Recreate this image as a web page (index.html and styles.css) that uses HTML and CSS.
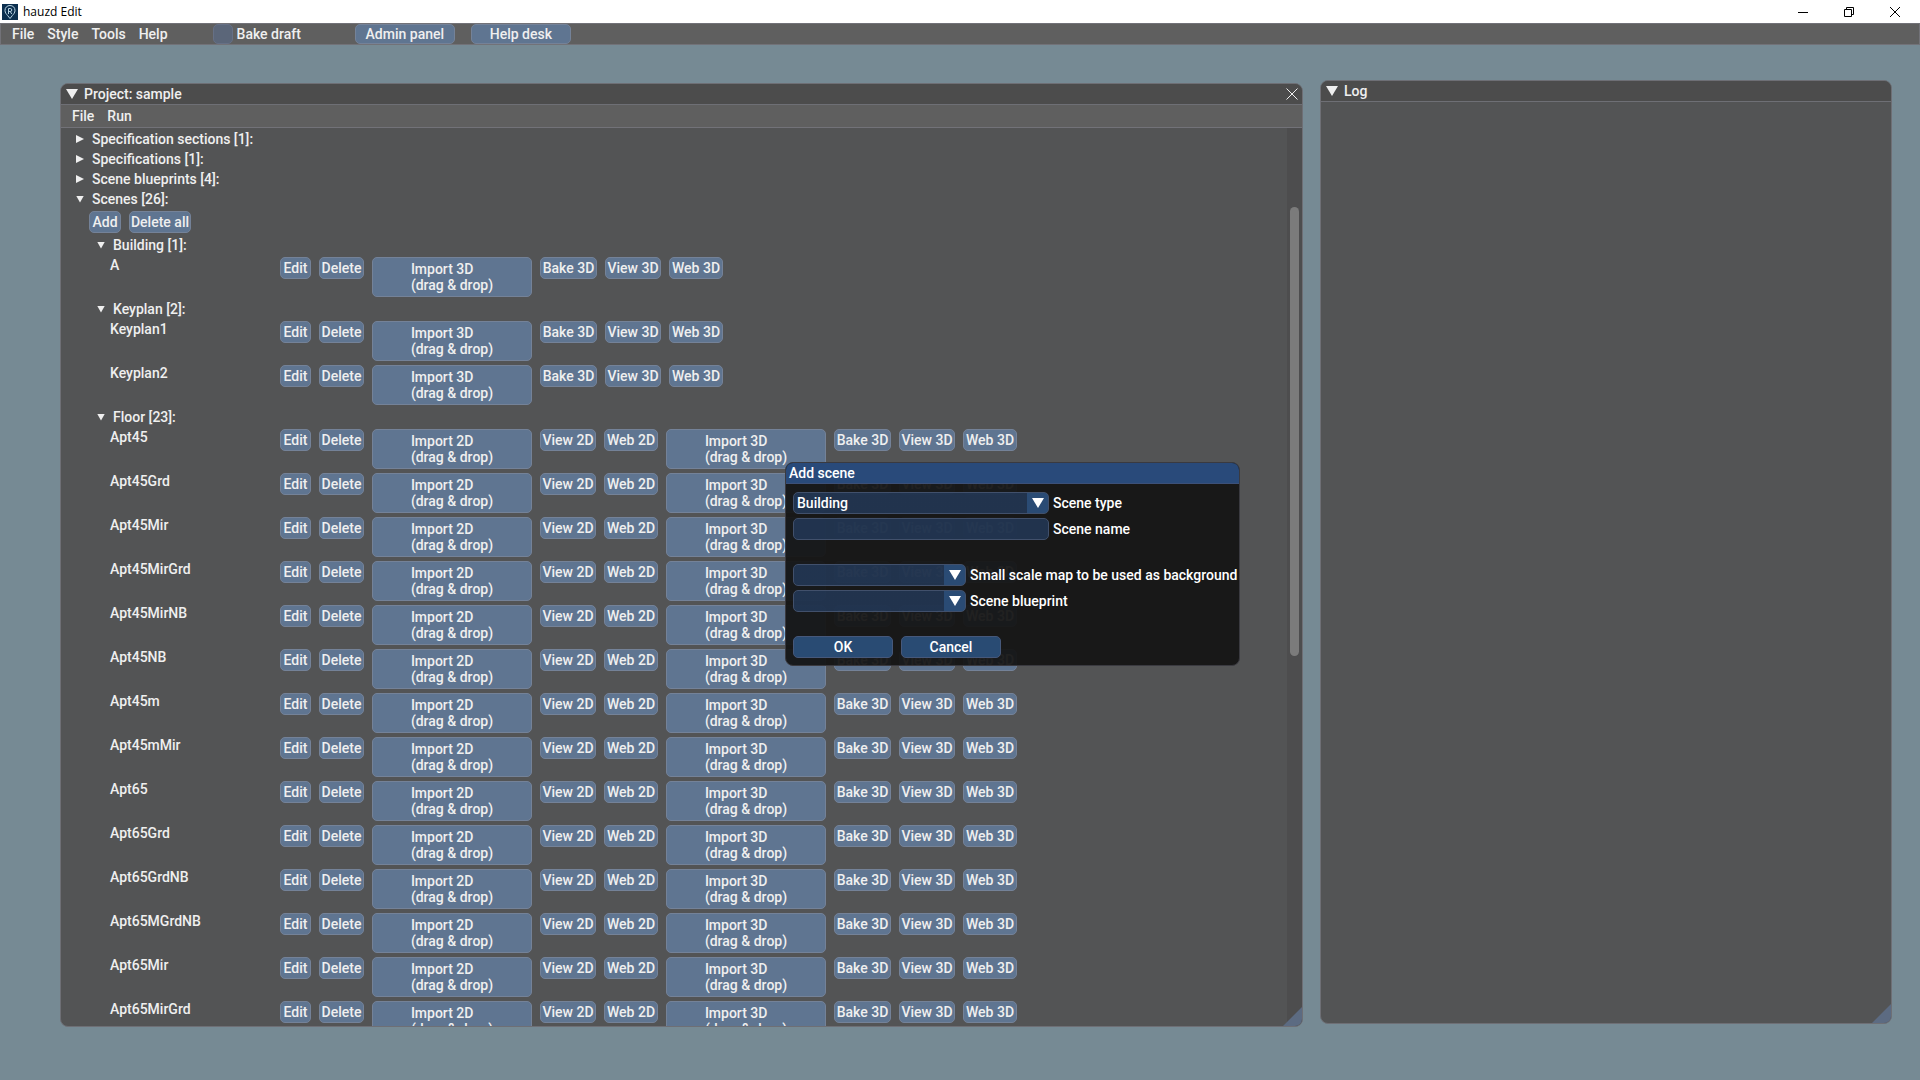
FILE: index.html
```
<!DOCTYPE html>
<html lang="en">
<head>
  <meta charset="UTF-8">
  <meta name="viewport" content="width=device-width, initial-scale=1.0">
  <title>hauzd Edit</title>
  <link rel="stylesheet" href="styles.css">
</head>
<body>
  <header class="titlebar">
    <svg class="logo" viewBox="0 0 16 16" aria-hidden="true">
      <rect width="16" height="16" fill="#0b2f4f"/>
      <path d="M8 1.5C5 1.5 3 3.6 3 6.4c0 2.400 1.500 3.800 2.700 5.200L8 14.500l2.300-2.900C11.500 10.200 13 8.800 13 6.400c0-2.800-2-4.900-5-4.900z" fill="none" stroke="#b9d3e2"/>
      <path d="M6.500 10V4.500h1.800a1.500 1.500 0 0 1 0 3H6.500M8.300 7.500L9.700 10" fill="none" stroke="#b9d3e2"/>
    </svg>
    <span class="app-name">hauzd Edit</span>
    <div class="window-buttons">
      <button type="button" aria-label="Minimize"><svg viewBox="0 0 10 10"><path d="M0 5.500h10"/></svg></button>
      <button type="button" aria-label="Restore"><svg viewBox="0 0 10 10"><path d="M.5 2.500h7v7h-7zM2.500 2.500v-2h7v7h-2"/></svg></button>
      <button type="button" aria-label="Close"><svg viewBox="0 0 10 10"><path d="M0 0l10 10M10 0L0 10"/></svg></button>
    </div>
  </header>

  <nav class="main-menu">
    <button type="button" class="menu-item">File</button>
    <button type="button" class="menu-item">Style</button>
    <button type="button" class="menu-item">Tools</button>
    <button type="button" class="menu-item">Help</button>
    <label class="bake-draft"><input type="checkbox">Bake draft</label>
    <button type="button" class="btn menu-btn">Admin panel</button>
    <button type="button" class="btn menu-btn">Help desk</button>
  </nav>

  <main class="desktop">
    <section class="window project">
      <div class="window-title">
        <span class="arrow-big"></span>
        <h2>Project: sample</h2>
        <button type="button" class="close" aria-label="Close"><svg viewBox="0 0 12 12"><path d="M.5.5l11 11M11.500.5l-11 11"/></svg></button>
      </div>
      <div class="window-menu">
        <button type="button" class="menu-item">File</button>
        <button type="button" class="menu-item">Run</button>
      </div>
      <div class="window-body">
        <div class="tree">
          <details><summary>Specification sections [1]:</summary></details>
          <details><summary>Specifications [1]:</summary></details>
          <details><summary>Scene blueprints [4]:</summary></details>
          <details open>
            <summary>Scenes [26]:</summary>
            <div class="actions">
              <button type="button" class="btn add">Add</button>
              <button type="button" class="btn delete-all">Delete all</button>
            </div>
            <div class="groups" id="groups"></div>
          </details>
        </div>
        <div class="scrollbar"><div class="thumb"></div></div>
      </div>
      <div class="grip"></div>
    </section>

    <section class="window log">
      <div class="window-title">
        <span class="arrow-big"></span>
        <h2>Log</h2>
      </div>
      <div class="grip"></div>
    </section>

    <form class="modal">
      <h2 class="modal-title">Add scene</h2>
      <div class="modal-body">
        <div class="field">
          <span class="combo wide"><select id="sceneType"><option>Building</option><option>Keyplan</option><option>Floor</option></select></span>
          <label for="sceneType">Scene type</label>
        </div>
        <div class="field">
          <input type="text" class="wide" id="sceneName">
          <label for="sceneName">Scene name</label>
        </div>
        <div class="field spaced">
          <span class="combo"><select id="smallMap"><option></option></select></span>
          <label for="smallMap">Small scale map to be used as background</label>
        </div>
        <div class="field">
          <span class="combo"><select id="blueprint"><option></option></select></span>
          <label for="blueprint">Scene blueprint</label>
        </div>
        <div class="modal-buttons">
          <button type="button">OK</button>
          <button type="button">Cancel</button>
        </div>
      </div>
    </form>
  </main>

  <script src="script.js"></script>
</body>
</html>
```
FILE: styles.css
```
* {
  box-sizing: border-box;
}
body {
  margin: 0;
  height: 100vh;
  display: flex;
  flex-direction: column;
  overflow: hidden;
  background: #768a94;
  color: #efefef;
  font: 500 14px/16px Roboto, sans-serif;
}
button, input, select {
  font: inherit;
  color: inherit;
}
h2 {
  margin: 0;
  font: inherit;
}

/* OS title bar */
.titlebar {
  display: flex;
  align-items: center;
  height: 23px;
  padding-left: 2px;
  background: #fff;
  color: #000;
}
.logo {
  width: 16px;
  height: 16px;
}
.app-name {
  margin-left: 5px;
  font: 12px/16px "Open Sans", sans-serif;
}
.window-buttons {
  display: flex;
  margin-left: auto;
  margin-right: 2px;
}
.window-buttons button {
  display: flex;
  align-items: center;
  justify-content: center;
  width: 46px;
  height: 20px;
  padding: 0;
  border: none;
  background: none;
}
.window-buttons svg {
  width: 10px;
  height: 10px;
  fill: none;
  stroke: #000;
}

/* main menu */
.main-menu {
  display: flex;
  align-items: center;
  height: 22px;
  padding-left: 11px;
  background: #5f5f5f;
  border: 1px solid #727278;
}
.menu-item {
  margin-right: 13px;
  padding: 0;
  border: none;
  background: none;
}
.bake-draft {
  display: flex;
  align-items: center;
  gap: 4px;
  margin-left: 32px;
  margin-right: 54px;
}
.bake-draft input {
  appearance: none;
  width: 20px;
  height: 20px;
  margin: 0;
  background: #5b6679;
  border: 1px solid #667085;
  border-radius: 5px;
}
.btn {
  height: 22px;
  padding: 0;
  border: 1px solid #748298;
  border-radius: 5px;
  background: #5f7591;
  white-space: nowrap;
}
.menu-btn {
  width: 100px;
  height: 20px;
  margin-right: 16px;
}

/* windows */
.desktop {
  flex: 1;
  position: relative;
}
.window {
  position: absolute;
  display: flex;
  flex-direction: column;
  overflow: hidden;
  background: #535455;
  border: 1px solid #6e6f75;
  border-radius: 8px;
}
.project {
  left: 60px;
  right: 617px;
  top: 38px;
  bottom: 53px;
}
.log {
  left: 1320px;
  right: 28px;
  top: 35px;
  bottom: 56px;
}
.window-title {
  display: flex;
  align-items: center;
  height: 21px;
  padding: 0 4px 0 5px;
  background: #4c4c4c;
  border-bottom: 1px solid #6e6f75;
}
.arrow-big {
  width: 12px;
  height: 10px;
  margin-right: 6px;
  background: #efefef;
  clip-path: polygon(0 0, 100% 0, 50% 100%);
}
.close {
  display: flex;
  margin-left: auto;
  padding: 0;
  border: none;
  background: none;
}
.close svg {
  width: 12px;
  height: 12px;
  fill: none;
  stroke: #efefef;
}
.window-menu {
  display: flex;
  align-items: center;
  height: 23px;
  padding-left: 11px;
  background: #5f5f5f;
  border-bottom: 1px solid #727278;
}
.window-body {
  flex: 1;
  display: flex;
  min-height: 0;
}
.tree {
  flex: 1;
  overflow: hidden;
  padding: 1px 0 0 15px;
}
.scrollbar {
  width: 15px;
  padding: 0 3px;
  background: #4d4d4e;
}
.thumb {
  height: 50%;
  margin-top: 79px;
  border-radius: 5px;
  background: #7b7b7b;
}
.grip {
  position: absolute;
  right: 0;
  bottom: 0;
  width: 19px;
  height: 19px;
  background: #5c6b82;
  clip-path: polygon(100% 0, 100% 100%, 0 100%);
}

/* scene tree */
summary {
  display: flex;
  align-items: center;
  height: 20px;
  list-style: none;
}
summary::before {
  content: "";
  width: 8px;
  height: 8px;
  margin-right: 8px;
  background: #efefef;
  clip-path: polygon(0 0, 100% 50%, 0 100%);
}
details[open] > summary::before {
  height: 7px;
  clip-path: polygon(0 0, 100% 0, 50% 100%);
}
.actions, .scene {
  display: flex;
  align-items: flex-start;
  gap: 8px;
  padding: 2px 0 2px 13px;
}
.groups {
  padding-left: 21px;
}
.scene-name {
  width: 162px;
}
.add {
  width: 32px;
}
.delete-all {
  width: 62px;
}
.edit {
  width: 31px;
}
.delete {
  width: 45px;
}
.bake {
  width: 57px;
}
.view {
  width: 56px;
}
.web {
  width: 54px;
}
.import {
  display: flex;
  align-items: center;
  justify-content: center;
  width: 160px;
  height: 40px;
  text-align: left;
}

/* add scene dialog */
.modal {
  position: absolute;
  left: 785px;
  top: 417px;
  overflow: hidden;
  color: #fff;
  background: rgba(20, 20, 20, 0.94);
  border: 1px solid #3a3a40;
  border-radius: 8px;
}
.modal-title {
  height: 21px;
  padding: 2px 3px;
  background: #294a7a;
  border-bottom: 1px solid #3c5078;
}
.modal-body {
  padding: 8px 2px 7px 7px;
}
.field {
  display: flex;
  align-items: center;
  gap: 4px;
  margin-bottom: 4px;
}
.spaced {
  margin-top: 24px;
}
.combo {
  position: relative;
  width: 173px;
  height: 22px;
}
.wide {
  width: 256px;
}
.field select, .field input {
  width: 100%;
  height: 22px;
  padding: 0 3px;
  border: 1px solid #41506b;
  border-radius: 5px;
  background: rgba(41, 74, 122, 0.54);
  appearance: none;
}
.field input.wide {
  width: 256px;
}
.field select {
  background: linear-gradient(to left, #2a4b74 21px, rgba(41, 74, 122, 0.54) 21px);
}
.combo::after {
  content: "";
  position: absolute;
  right: 5px;
  top: 6px;
  width: 12px;
  height: 10px;
  background: #fff;
  clip-path: polygon(0 0, 100% 0, 50% 100%);
  pointer-events: none;
}
.modal-buttons {
  display: flex;
  gap: 8px;
  margin-top: 24px;
}
.modal-buttons button {
  width: 100px;
  height: 22px;
  padding: 0;
  border: 1px solid #46587a;
  border-radius: 5px;
  background: #294b73;
}
```
FILE: script.js
```
const scenes = {
  'Building [1]:': ['A'],
  'Keyplan [2]:': ['Keyplan1', 'Keyplan2'],
  'Floor [23]:': [
    'Apt45', 'Apt45Grd', 'Apt45Mir', 'Apt45MirGrd', 'Apt45MirNB', 'Apt45NB', 'Apt45m',
    'Apt45mMir', 'Apt65', 'Apt65Grd', 'Apt65GrdNB', 'Apt65MGrdNB', 'Apt65Mir', 'Apt65MirGrd'
  ]
};

// the first word of the caption is also the class that sets the width
const button = text =>
  `<button type="button" class="btn ${text.split(' ')[0].toLowerCase()}">${text}</button>`;
const importButton = kind =>
  `<button type="button" class="btn import"><span>Import ${kind}<br>(drag &amp; drop)</span></button>`;

function sceneRow(name, isFloor) {
  const plan = isFloor ? importButton('2D') + button('View 2D') + button('Web 2D') : '';
  return `<div class="scene">
    <span class="scene-name">${name}</span>
    ${button('Edit')}${button('Delete')}${plan}
    ${importButton('3D')}${button('Bake 3D')}${button('View 3D')}${button('Web 3D')}
  </div>`;
}

document.getElementById('groups').innerHTML = Object.entries(scenes).map(([title, names]) =>
  `<details open>
    <summary>${title}</summary>
    ${names.map(name => sceneRow(name, title.startsWith('Floor'))).join('')}
  </details>`
).join('');
```
